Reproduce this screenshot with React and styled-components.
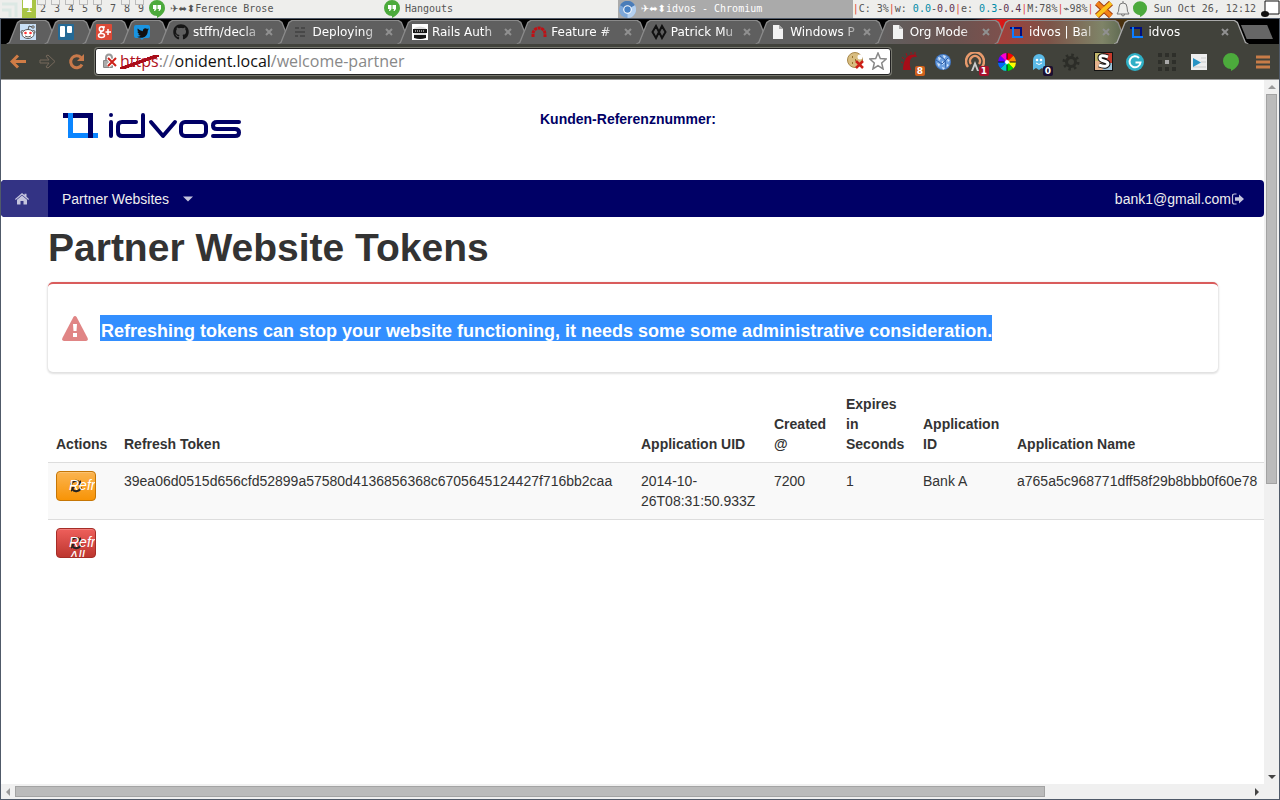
import React from "react";
import styled, { createGlobalStyle, css } from "styled-components";
import { FaGithub, FaTwitter } from "react-icons/fa";

const GlobalStyle = createGlobalStyle`
  * {
    box-sizing: border-box;
  }

  body {
    margin: 0;
    font-family: "Liberation Sans", Arial, sans-serif;
    font-size: 14px;
    line-height: 20px;
    color: #333;
    background: #fff;
  }

  svg {
    display: block;
    flex: none;
  }
`;

const Screen = styled.div`
  display: flex;
  flex-direction: column;
  height: 100vh;
  overflow: hidden;
`;

/* ---------- desktop bar ---------- */

const DesktopBar = styled.header`
  display: flex;
  flex: none;
  height: 18px;
  background: #eeeeec;
  color: #555;
  font: 10px/18px "DejaVu Sans Mono", monospace;
  white-space: pre;
`;

const Launcher = styled.div`
  width: 22px;
  padding: 1px 2px;
`;

const Workspace = styled.button`
  width: 14px;
  padding: 0;
  border: 0;
  font: inherit;
  text-align: center;
  color: ${(p) => (p.$active ? "#fff" : "#555")};
  background: ${(p) => (p.$active ? "#a9c545" : "transparent")};
  position: relative;

  &::before {
    content: "";
    display: ${(p) => (p.$empty ? "none" : "block")};
    position: absolute;
    left: 1px;
    top: 0;
    width: 7px;
    height: ${(p) => (p.$active ? "7px" : "4px")};
    border: 1px solid ${(p) => (p.$active ? "#fff" : "#bbb")};
    border-top: 0;
    background: ${(p) => (p.$active ? "#fff" : "transparent")};
  }
`;

const Task = styled.button`
  display: flex;
  align-items: center;
  gap: 5px;
  flex: 1;
  padding: 0 1px;
  border: 0;
  font: inherit;
  white-space: pre;
  color: ${(p) => (p.$active ? "#fff" : "#555")};
  background: ${(p) => (p.$active ? "#aaa" : "transparent")};
`;

const Flags = styled.span`
  font-family: "DejaVu Sans", sans-serif;
`;

const Stats = styled.div`
  width: 242px;
`;

const Sep = styled.span`
  color: #e0443a;
`;

const Read = styled.span`
  color: #008ba7;
`;

const Write = styled.span`
  color: #5c3350;
`;

const Tray = styled.div`
  display: flex;
  align-items: center;
  gap: 3px;
`;

const Clock = styled.time`
  padding: 0 2px 0 4px;
`;

/* ---------- browser ---------- */

const Browser = styled.div`
  display: flex;
  flex-direction: column;
  flex: 1;
  min-height: 0;
  border: 1px solid #505a69;
`;

const TabStrip = styled.nav`
  display: flex;
  align-items: flex-end;
  flex: none;
  height: 25px;
  padding: 0 6px 0 5px;
  background: linear-gradient(
    90deg,
    #000 0 76%,
    #e01818 78%,
    #7a1a10 83%,
    #26400c 91%,
    #000 94%
  );
`;

const Tab = styled.button`
  display: flex;
  align-items: center;
  gap: 4px;
  flex: ${(p) => (p.$pinned ? "0 0 54px" : "1 1 0")};
  min-width: 0;
  height: 24px;
  margin-right: -16px;
  padding: ${(p) => (p.$pinned ? "0 14px" : "0 20px 0 15px")};
  border: 0;
  background: none;
  color: #fff;
  font: 12px/20px "DejaVu Sans", sans-serif;
  position: relative;
  z-index: ${(p) => (p.$active ? 2 : 1)};

  &::before,
  &::after {
    content: "";
    position: absolute;
    inset: 0;
    z-index: -1;
    background: ${(p) => (p.$active ? "#aaa" : "#8a8a8a")};
    clip-path: polygon(
      0 100%,
      3px 22px,
      11px 2px,
      14px 0,
      calc(100% - 14px) 0,
      calc(100% - 11px) 2px,
      calc(100% - 3px) 22px,
      100% 100%
    );
  }

  &::after {
    inset: 1px 1px 0;
    background: ${(p) => p.$tint || "#5f5f5f"};
  }

  &:last-of-type {
    margin-right: 0;
  }
`;

const TabTitle = styled.span`
  flex: 1;
  overflow: hidden;
  text-align: left;
  white-space: nowrap;
  mask-image: linear-gradient(90deg, #000 75%, rgba(0, 0, 0, 0.2) 100%);
`;

const TabClose = styled.svg`
  width: 8px;
  height: 8px;
  stroke: #909090;
  stroke-width: 2;
`;

const NewTab = styled.a`
  width: 32px;
  height: 14px;
  margin: 0 0 5px -8px;
  background: #666;
  clip-path: polygon(0 0, 82% 0, 100% 100%, 18% 100%);
`;

const Toolbar = styled.div`
  display: flex;
  align-items: center;
  flex: none;
  height: 36px;
  background: #41423b;
  border-bottom: 1px solid #999;
`;

const ToolButton = styled.button`
  display: flex;
  align-items: center;
  justify-content: center;
  flex: none;
  width: ${(p) => p.$width || 32}px;
  height: 28px;
  padding: 0;
  border: 0;
  background: none;
  position: relative;
`;

const NavButtons = styled.div`
  display: flex;
  padding: 0 4px 0 3px;
`;

const Omnibox = styled.div`
  display: flex;
  align-items: center;
  flex: 1;
  min-width: 0;
  height: 27px;
  padding: 0 3px 2px 6px;
  background: #fff;
  border: 1px solid #222;
  border-radius: 3px;
  box-shadow: 0 0 0 1px #77786f;
  font: 16px/24px "Open Sans", sans-serif;
  color: #888;
`;

const Scheme = styled.span`
  margin-left: 2px;
  color: #b01020;
  background: linear-gradient(
      to top left,
      transparent 43%,
      #a80c18 44% 56%,
      transparent 57%
    )
    0 6px / 100% 14px no-repeat;
`;

const Host = styled.span`
  color: #111;
`;

const PathInput = styled.input`
  flex: 1;
  min-width: 0;
  padding: 0;
  border: 0;
  outline: 0;
  font: inherit;
  color: inherit;
  background: transparent;
`;

const OmniIcons = styled.div`
  display: flex;
  gap: 4px;
`;

const Extensions = styled.div`
  display: flex;
  margin-left: 4px;
`;

const Badge = styled.span`
  position: absolute;
  right: 2px;
  bottom: 0;
  width: 10px;
  border-radius: 2px;
  background: ${(p) => p.$color};
  color: #fff;
  font: bold 9px/10px "DejaVu Sans", sans-serif;
`;

/* ---------- scrolling view ---------- */

const View = styled.div`
  display: grid;
  grid-template: minmax(0, 1fr) 15px / minmax(0, 1fr) 15px;
  flex: 1;
  min-height: 0;
`;

const ScrollTrack = styled.div`
  display: flex;
  flex-direction: ${(p) => (p.$vertical ? "column" : "row")};
  align-items: center;
  background: #f0f0f0;
`;

const ScrollArrow = styled.span`
  display: flex;
  align-items: center;
  justify-content: center;
  width: 14px;
  height: 14px;
  color: ${(p) => (p.$idle ? "#999" : "#444")};
`;

const ScrollRoom = styled.div`
  display: flex;
  flex: 1;
  flex-direction: inherit;
  align-items: center;
`;

const ScrollThumb = styled.div`
  background: #bbb;
  border: 1px solid #a3a3a3;
  ${(p) =>
    p.$vertical
      ? css`
          flex: 23;
          width: 11px;
        `
      : css`
          flex: 85;
          height: 11px;
        `}
`;

const ScrollRest = styled.div`
  flex: 17;
`;

/* ---------- page ---------- */

const Page = styled.main`
  overflow: hidden;
  background: #fff;
`;

const Masthead = styled.div`
  display: flex;
  height: 100px;
  padding: 29px 62px 0;
`;

const LogoLink = styled.a`
  flex: none;
  width: 477px;
  padding-top: 4px;
`;

const Reference = styled.strong`
  color: #000066;
`;

const Navbar = styled.nav`
  display: flex;
  align-items: stretch;
  height: 37px;
  background: #000066;
  border-radius: 4px;
  overflow: hidden;
`;

const NavLink = styled.a`
  display: flex;
  align-items: center;
  gap: ${(p) => p.$gap || 0}px;
  padding: 0 ${(p) => (p.$wide ? 19 : 14)}px 0 14px;
  color: #eee;
  text-decoration: none;
  background: ${(p) => (p.$active ? "#333384" : "transparent")};

  svg {
    color: #c4c4dd;
  }

  &:last-child {
    margin-left: auto;
  }
`;

const Container = styled.div`
  width: 1170px;
  margin: 0 0 0 47px;
`;

const Title = styled.h1`
  margin: 11px 0 14px;
  font-size: 39px;
  line-height: 40px;
`;

const Message = styled.div`
  display: flex;
  align-items: center;
  gap: 12px;
  height: 90px;
  margin-bottom: 14px;
  padding: 0 14px;
  border-top: 2px solid #d95c5c;
  border-radius: 5px;
  box-shadow: 0 1px 2px 1px rgba(0, 0, 0, 0.12);
`;

const Selected = styled.mark`
  padding: 6px 0 0 1px;
  background: #338fff;
  color: #fff;
  font-size: 18px;
  font-weight: bold;
  line-height: 20px;
`;

const TokenTable = styled.table`
  width: 1600px;
  table-layout: fixed;
  border-collapse: collapse;

  th,
  td {
    padding: 8px;
    text-align: left;
  }

  th {
    vertical-align: bottom;
  }

  td {
    vertical-align: top;
    border-top: 1px solid #ddd;
  }

  tbody tr:nth-child(odd) {
    background: #f9f9f9;
  }

  tbody tr:last-child {
    background: none;
  }
`;

const RefreshButton = styled.button`
  display: flex;
  align-items: flex-start;
  width: 40px;
  height: 30px;
  padding: 6px 0 0 12px;
  overflow: hidden;
  border: 1px solid ${(p) => (p.$danger ? "#a52d27" : "#c67605")};
  border-radius: 4px;
  background: ${(p) =>
    p.$danger
      ? "linear-gradient(#ee5f5b, #bd362f)"
      : "linear-gradient(#fbb450, #f89406)"};
  box-shadow: inset 0 1px 0 rgba(255, 255, 255, 0.2);
  color: #fff;
  font: italic 14px/14px "Liberation Sans", Arial, sans-serif;
`;

const RefreshIcon = styled.i`
  display: block;
  width: 14px;
  height: 16px;
  text-align: left;
  background: url('data:image/svg+xml,<svg xmlns="http://www.w3.org/2000/svg" width="14" height="14" viewBox="0 0 14 14"><path d="M2 6a5 5 0 0 1 9-2M12 8a5 5 0 0 1-9 2" fill="none" stroke="%23222" stroke-width="2"/><path d="M12 1v5H8zM2 13V8h4z" fill="%23222"/></svg>')
    no-repeat 0 1px;
`;

/* ---------- icons ---------- */

const Hangouts = ({ size = 18, plain }) => (
  <svg width={size - 2} height={size} viewBox="0 0 16 18">
    <path d="M8 0a8 8 0 0 1 8 8c0 4-3 7.500-8 10v-2A8 8 0 0 1 8 0z" fill="#4caa3c" />
    {!plain && (
      <path d="M4 5h3.500v4L6 11H5l.5-2H4zM8.500 5H12v4l-1.500 2h-1l.5-2H8.500z" fill="#fff" />
    )}
  </svg>
);

const Chromium = () => (
  <svg width="17" height="17" viewBox="0 0 16 16">
    <circle cx="8" cy="8" r="8" fill="#7da7d9" />
    <path d="M8 8L1 4a8 8 0 0 1 14 0z" fill="#4a7cb8" />
    <path d="M8 8l7-4a8 8 0 0 1-7 12z" fill="#b4d0f0" />
    <circle cx="8" cy="8" r="4" fill="#fff" />
    <circle cx="8" cy="8" r="3" fill="#4680c4" />
  </svg>
);

const Reddit = () => (
  <svg width="16" height="16" viewBox="0 0 16 16">
    <path fill="#c9e0f7" d="M0 0h16v16H0z" />
    <g fill="#fff" stroke="#333" strokeWidth=".8">
      <path d="M8 6l1-4 3 1" fill="none" />
      <circle cx="13" cy="3" r="1.200" />
      <circle cx="2.500" cy="8" r="1.500" />
      <circle cx="13.500" cy="8" r="1.500" />
      <ellipse cx="8" cy="10" rx="6" ry="4.500" />
      <path d="M5 12q3 2 6 0" fill="none" />
    </g>
    <circle cx="5.500" cy="9" r="1.300" fill="#f33" />
    <circle cx="10.500" cy="9" r="1.300" fill="#f33" />
  </svg>
);

const Trello = () => (
  <svg width="16" height="16" viewBox="0 0 16 16">
    <rect width="16" height="16" rx="1" fill="#256a96" />
    <rect x="2" y="2" width="5" height="11" rx="1" fill="#fff" />
    <rect x="9" y="2" width="5" height="7" rx="1" fill="#fff" />
  </svg>
);

const GooglePlus = () => (
  <svg width="16" height="16" viewBox="0 0 16 16">
    <rect width="16" height="16" rx="1" fill="#db4a37" />
    <g fill="none" stroke="#fff" strokeWidth="1.500">
      <circle cx="5.500" cy="5" r="2.200" />
      <path d="M6 3h3M6 7q-3 1 0 2.500" />
      <ellipse cx="5.500" cy="11.500" rx="3" ry="2" />
      <path d="M12 5v6M9.500 8h5.500" />
    </g>
  </svg>
);

const TwitterTile = () => (
  <svg width="16" height="16" viewBox="0 0 16 16">
    <path d="M2 1h12q2 0 2 2v9q0 2-2 2h-4l-2 2-2-2H2q-2 0-2-2V3q0-2 2-2z" fill="#1a94e0" />
    <FaTwitter x="3" y="3" width="10" height="10" color="#111" />
  </svg>
);

const Lines = () => (
  <svg width="16" height="16" viewBox="0 0 16 16" stroke="#484848" strokeWidth="2">
    <path d="M3 4h4M9 4h4M3 8h10M3 12h3M8 12h5" />
  </svg>
);

const Rails = () => (
  <svg width="16" height="16" viewBox="0 0 16 16">
    <path fill="#fff" d="M0 0h16v16H0z" />
    <path d="M2 4q6-3 12 0v9q-6 3-12 0z" fill="#ddd" />
    <path d="M1 5h14v4H1zM2 11h12v3q-6 2-12 0z" fill="#161616" />
    <path d="M3 7h10" stroke="#fff" strokeDasharray="1 1" />
  </svg>
);

const Redmine = () => (
  <svg width="16" height="16" viewBox="0 0 16 16">
    <path d="M2 13V10a6 6 0 0 1 12 0v3" fill="none" stroke="#c01015" strokeWidth="3" strokeDasharray="3 .6" />
  </svg>
);

const Rings = () => (
  <svg width="16" height="16" viewBox="0 0 16 16" fill="none" stroke="#111" strokeWidth="2">
    <path d="M5 2L1.500 8 5 14l3-6zM11 2L8 8l3 6 3.500-6z" />
  </svg>
);

const Sheet = () => (
  <svg width="16" height="16" viewBox="0 0 16 16">
    <path d="M3 1h6l4 4v10H3z" fill="#f2f2f2" />
    <path d="M9 1v4h4z" fill="#aaa" />
  </svg>
);

const Crop = () => (
  <svg width="16" height="16" viewBox="0 0 16 16" fill="none" strokeWidth="2">
    <path d="M1 4h11v10" stroke="#000e80" />
    <path d="M4 3v10h10" stroke="#0a7cff" />
  </svg>
);

const Logo = () => (
  <svg width="180" height="26" viewBox="0 0 180 26" fill="none" role="img" aria-label="idvos">
    <path d="M0 0h29v5H0z" fill="#000066" />
    <path d="M5 0h5v20h25v5H5z" fill="#0a85ff" />
    <path d="M25 0h5v25h-5z" fill="#000066" />
    <g stroke="#000066" strokeWidth="4" strokeLinecap="round" strokeLinejoin="round">
      <path d="M48 2v0M48 9v14" />
      <path d="M80 2v21H59q-4 0-4-4v-6q0-4 4-4h14" />
      <path d="M88 9l12 14 12-14" />
      <rect x="118" y="9" width="25" height="14" rx="4" />
      <path d="M176 9h-22q-4 0-4 3.500t4 3.500h18q4 0 4 3.500t-4 3.500h-22" />
    </g>
  </svg>
);

const Home = () => (
  <svg width="14" height="14" viewBox="0 0 14 14" fill="currentColor">
    <path d="M7 3.500l5 4.200V12q0 .6-.6.600H8.500V9h-3v3.600H2.600Q2 12.600 2 12V7.700z" />
    <path d="M7 1l2.500 2.100V1.800h2v3L14 7l-.7.900L7 2.700.7 7.900 0 7z" />
  </svg>
);

const SignOut = () => (
  <svg width="14" height="14" viewBox="0 0 14 14">
    <path d="M5.500 2H3.500Q1.500 2 1.500 4v6q0 2 2 2h2" fill="none" stroke="currentColor" strokeWidth="1.200" />
    <path d="M4 5.200h4V2.500L13 7l-5 4.500V8.800H4z" fill="currentColor" />
  </svg>
);

const Warning = () => (
  <svg width="26" height="25" viewBox="0 0 26 25">
    <path d="M13 0q1 0 1.600 1l11 21q.8 3-1.600 3H2q-2.400 0-1.600-3l11-21Q12 0 13 0z" fill="#e08585" />
    <path d="M11 8h4l-.5 7h-3zM11 17h4v4h-4z" fill="#fff" />
  </svg>
);

const Caret = ({ d, size = 8 }) => (
  <svg width={size} height={size} viewBox="0 0 8 8" fill="currentColor">
    <path d={d} />
  </svg>
);

const Rhino = () => (
  <svg width="22" height="22" viewBox="0 0 22 22">
    <path d="M3 19q0-7 3-12 4-5 10-3l1 2q-6-1-7 4-1 4 1 9z" fill="#a50d18" />
    <path d="M3 12l-2-1M4 8L2 6M7 5L6 2M11 3V1M15 4V1" stroke="#a50d18" />
  </svg>
);

const Globe = () => (
  <svg width="18" height="18" viewBox="0 0 18 18">
    <circle cx="9" cy="9" r="8" fill="#4278c4" />
    <circle cx="9" cy="9" r="7" fill="#6da0e0" />
    <path d="M4 4l3 1-2 3zM9 2l3 1-2 3zM13 6l3 1-2 2zM3 10l3 1-1 3zM8 8l3 2-3 2zM13 11l2 1-3 3zM8 14l3 1-2 2z" fill="#d4e6fb" />
    <path d="M2 7l6 4 6-6M6 3l5 4 1 8" stroke="#2e5fa8" fill="none" />
  </svg>
);

const Antenna = () => (
  <svg width="20" height="20" viewBox="0 0 20 20" fill="none">
    <path d="M3 15a9 9 0 1 1 14 0M6 12a5 5 0 1 1 8 0" stroke="#e89a6c" strokeWidth="2.500" />
    <path d="M10 9l4 10h-2l-2-5-2 5H6z" fill="#ccc" />
  </svg>
);

const wheel = ["#f00", "#f80", "#ff0", "#0d0", "#0cc", "#06f", "#60f", "#f0c"];

const ColorWheel = () => (
  <svg width="18" height="18" viewBox="0 0 18 18">
    {wheel.map((color, i) => (
      <path key={color} d="M9 9V0a9 9 0 0 1 6.400 2.600z" fill={color} transform={`rotate(${i * 45} 9 9)`} />
    ))}
    <path d="M9 0v6M9 12v6M0 9h6M12 9h6" stroke="#111" />
    <circle cx="9" cy="9" r="2" fill="#fff" />
  </svg>
);

const Ghost = () => (
  <svg width="18" height="20" viewBox="0 0 18 20">
    <path d="M3 18V8a6 6 0 0 1 12 0v10l-3-2-3 2-3-2z" fill="#5bbbe8" />
    <circle cx="7" cy="8" r="1.300" fill="#fff" />
    <circle cx="11" cy="8" r="1.300" fill="#fff" />
    <path d="M6 11q3 3 6 0" stroke="#fff" fill="none" />
  </svg>
);

const Gear = () => (
  <svg width="18" height="18" viewBox="0 0 18 18" fill="none" stroke="#2c2d28">
    <circle cx="9" cy="9" r="4.500" strokeWidth="3" />
    <circle cx="9" cy="9" r="7" strokeWidth="3" strokeDasharray="2.500 3" />
  </svg>
);

const Stylish = () => (
  <svg width="19" height="19" viewBox="0 0 19 19">
    <path d="M0 0h19v19H0z" fill="#111" />
    <path d="M1 1h8v8H1z" fill="#c3b86c" />
    <path d="M9 1h9v10H9z" fill="#c53b2c" />
    <path d="M1 9h8v9H1z" fill="#e6b28c" />
    <path d="M9 11h9v7H9z" fill="#9cc4dc" />
    <path d="M14 5q-8-3-8 1 0 2 4 3t4 3q-1 4-9 1" fill="none" stroke="#111" strokeWidth="5" />
    <path d="M14 5q-8-3-8 1 0 2 4 3t4 3q-1 4-9 1" fill="none" stroke="#fff" strokeWidth="3" />
  </svg>
);

const GRing = () => (
  <svg width="18" height="18" viewBox="0 0 18 18">
    <circle cx="9" cy="9" r="9" fill="#2fb0c6" />
    <path d="M13 5a5.500 5.500 0 1 0 1.500 4.500H9.500" fill="none" stroke="#fff" strokeWidth="2" />
  </svg>
);

const Dots = () => (
  <svg width="18" height="18" viewBox="0 0 18 18" fill="#2e2f2a">
    {[0, 7, 14].flatMap((y) =>
      [0, 7, 14].map((x) => <rect key={`${x}-${y}`} x={x} y={y} width="4" height="4" />)
    )}
    <rect x="7" y="7" width="4" height="4" fill="#aaa" />
  </svg>
);

const Player = () => (
  <svg width="16" height="16" viewBox="0 0 16 16">
    <path d="M0 0h16v16H0z" fill="#eee" />
    <path d="M10 4h5M10 8h5M2 13h13" stroke="#ccc" />
    <path d="M2 4l8 4.500L2 13z" fill="#2793c4" />
  </svg>
);

const Menu = () => (
  <svg width="14" height="14" viewBox="0 0 14 14" stroke="#c87c48" strokeWidth="3">
    <path d="M0 2h14M0 7h14M0 12h14" />
  </svg>
);

const BackArrow = ({ color, flip }) => (
  <svg width="17" height="15" viewBox="0 0 17 15" fill="none" stroke={color} strokeWidth={flip ? 1 : 3}>
    {flip ? <path d="M1 6h9L7 2l2-1 7 6.500L9 14l-2-1 3-4H1z" /> : <path d="M16 7.500H2M8 1.500l-6 6 6 6" />}
  </svg>
);

const Reload = () => (
  <svg width="17" height="17" viewBox="0 0 17 17">
    <path d="M13 4.500a6 6 0 1 0 1 7" fill="none" stroke="#c8794a" strokeWidth="3" />
    <path d="M16 1v7H9z" fill="#c8794a" />
  </svg>
);

const BadLock = () => (
  <svg width="16" height="16" viewBox="0 0 16 16">
    <path d="M4 8V5q0-3.500 3-3.500T10 5v3" fill="none" stroke="#999" strokeWidth="2" />
    <rect x="1" y="7" width="10" height="8" rx="1" fill="#888" />
    <path d="M2 9h8M2 11h8M2 13h8" stroke="#ccc" />
    <path d="M6 5l8 8M14 5l-8 8" stroke="#fff" strokeWidth="4" />
    <path d="M6 5l8 8M14 5l-8 8" stroke="#cc2018" strokeWidth="2" />
  </svg>
);

const Cookie = () => (
  <svg width="18" height="18" viewBox="0 0 18 18">
    <circle cx="8" cy="8" r="7.500" fill="#d8bd80" stroke="#a8874a" />
    <circle cx="13" cy="5" r="2.500" fill="#fff" />
    <path d="M5 5h1M8 8h1M5 11h1" stroke="#96702c" strokeWidth="2" />
    <path d="M9 9l7 7M16 9l-7 7" stroke="#cc2018" strokeWidth="2.500" />
  </svg>
);

const Star = () => (
  <svg width="18" height="18" viewBox="0 0 18 18">
    <path d="M9 1l2.300 5.500 5.900.5-4.500 3.900L14.100 17 9 13.700 3.900 17l1.400-6.100L.8 7l5.900-.5z" fill="#fff" stroke="#888" strokeWidth="1.500" />
  </svg>
);

const CrossedX = () => (
  <svg width="18" height="17" viewBox="0 0 18 17">
    <path d="M2 2l14 13M16 2L2 15" stroke="#a23d10" strokeWidth="6" />
    <path d="M2 2l14 13" stroke="#f08018" strokeWidth="4" />
    <path d="M16 2L2 15" stroke="#fbc21c" strokeWidth="4" />
  </svg>
);

const Bell = () => (
  <svg width="14" height="16" viewBox="0 0 14 16" fill="none" stroke="#777">
    <path d="M1 13q2-2 2-7 0-4 4-4t4 4q0 5 2 7zM5.500 13q0 2 1.500 2t1.500-2M7 0v2" />
  </svg>
);

const Corner = () => (
  <svg width="19" height="18" viewBox="0 0 19 18">
    <path d="M4 1h14v13H4z" fill="#fff" stroke="#111" />
    <ellipse cx="4" cy="14" rx="4" ry="3" fill="#111" />
  </svg>
);

const Grip = () => (
  <svg width="17" height="16" viewBox="0 0 17 16" fill="none" stroke="#dce8e4" strokeWidth="3">
    <path d="M0 3h14v13M0 9h8v7" />
  </svg>
);

/* ---------- content ---------- */

const pinned = [
  { name: "Reddit", icon: <Reddit /> },
  { name: "Trello", icon: <Trello /> },
  { name: "Google+", icon: <GooglePlus /> },
  { name: "Twitter", icon: <TwitterTile /> },
];

const tabs = [
  { title: "stffn/decla", icon: <FaGithub size={16} color="#161616" /> },
  { title: "Deploying", icon: <Lines /> },
  { title: "Rails Auth", icon: <Rails /> },
  { title: "Feature #", icon: <Redmine /> },
  { title: "Patrick Mu", icon: <Rings /> },
  { title: "Windows P", icon: <Sheet /> },
  { title: "Org Mode", icon: <Sheet />, tint: "linear-gradient(90deg, #5f5f5f, #6b5350 60%, #80504c)" },
  { title: "idvos | Bal", icon: <Crop />, tint: "linear-gradient(90deg, #a83c38, #7c5348 40%, #7f8468 80%, #55624a)" },
  { title: "idvos", icon: <Crop />, tint: "#41423b", active: true },
];

const extensions = [
  { name: "Rhino", icon: <Rhino />, badge: "8", color: "#d0601c" },
  { name: "Globe", icon: <Globe /> },
  { name: "Antenna", icon: <Antenna />, badge: "1", color: "#a8102c" },
  { name: "Colors", icon: <ColorWheel /> },
  { name: "Ghost", icon: <Ghost />, badge: "0", color: "#1b0f30" },
  { name: "Settings", icon: <Gear /> },
  { name: "Styles", icon: <Stylish /> },
  { name: "Search", icon: <GRing /> },
  { name: "Grid", icon: <Dots /> },
  { name: "Player", icon: <Player /> },
  { name: "Chat", icon: <Hangouts plain /> },
  { name: "Menu", icon: <Menu /> },
];

const columns = [
  { label: "Actions", width: 68 },
  { label: "Refresh Token", width: 517 },
  { label: "Application UID", width: 133 },
  { label: "Created @", width: 72 },
  { label: "Expires in Seconds", width: 77 },
  { label: "Application ID", width: 94 },
  { label: "Application Name" },
];

const tokens = [
  [
    "39ea06d0515d656cfd52899a57580d4136856368c6705645124427f716bb2caa",
    "2014-10-26T08:31:50.933Z",
    "7200",
    "1",
    "Bank A",
    "a765a5c968771dff58f29b8bbb0f60e78",
  ],
];

function StatusBar() {
  return (
    <DesktopBar>
      <Launcher>
        <Grip />
      </Launcher>
      {[1, 2, 3, 4, 5, 6, 7, 8, 9].map((n) => (
        <Workspace key={n} $active={n === 1} $empty={n === 7}>
          {n}
        </Workspace>
      ))}
      <Task>
        <Hangouts />
        <span>
          <Flags>✈⬌⬍</Flags>Ference Brose
        </span>
      </Task>
      <Task>
        <Hangouts />
        Hangouts
      </Task>
      <Task $active>
        <Chromium />
        <span>
          <Flags>✈⬌⬍</Flags>idvos - Chromium
        </span>
      </Task>
      <Stats>
        <Sep>|</Sep>C: 3%<Sep>|</Sep>w: <Read>0.0</Read>-<Write>0.0</Write>
        <Sep>|</Sep>e: <Read>0.3</Read>-<Write>0.4</Write>
        <Sep>|</Sep>M:78%<Sep>|</Sep>⌁98%<Sep>|</Sep>
      </Stats>
      <Tray>
        <CrossedX />
        <Bell />
        <Hangouts size={16} plain />
        <Clock>Sun Oct 26, 12:12</Clock>
        <Corner />
      </Tray>
    </DesktopBar>
  );
}

function Tabs() {
  return (
    <TabStrip>
      {pinned.map((tab) => (
        <Tab key={tab.name} $pinned aria-label={tab.name}>
          {tab.icon}
        </Tab>
      ))}
      {tabs.map((tab) => (
        <Tab key={tab.title} $active={tab.active} $tint={tab.tint}>
          {tab.icon}
          <TabTitle>{tab.title}</TabTitle>
          <TabClose viewBox="0 0 8 8">
            <path d="M1 1l6 6M7 1L1 7" />
          </TabClose>
        </Tab>
      ))}
      <NewTab href="#new" aria-label="New tab" />
    </TabStrip>
  );
}

function AddressBar() {
  return (
    <Toolbar>
      <NavButtons>
        <ToolButton $width={29} aria-label="Back">
          <BackArrow color="#d07c46" />
        </ToolButton>
        <ToolButton $width={29} aria-label="Forward">
          <BackArrow color="#76695c" flip />
        </ToolButton>
        <ToolButton $width={29} aria-label="Reload">
          <Reload />
        </ToolButton>
      </NavButtons>
      <Omnibox>
        <BadLock />
        <Scheme>https</Scheme>
        <span>://</span>
        <Host>onident.local</Host>
        <PathInput aria-label="Address" defaultValue="/welcome-partner" />
        <OmniIcons>
          <Cookie />
          <Star />
        </OmniIcons>
      </Omnibox>
      <Extensions>
        {extensions.map((ext) => (
          <ToolButton key={ext.name} aria-label={ext.name}>
            {ext.icon}
            {ext.badge && <Badge $color={ext.color}>{ext.badge}</Badge>}
          </ToolButton>
        ))}
      </Extensions>
    </Toolbar>
  );
}

function Scrollbar({ vertical }) {
  return (
    <ScrollTrack $vertical={vertical}>
      <ScrollArrow $idle>
        <Caret d={vertical ? "M0 6l4-4 4 4z" : "M6 0L2 4l4 4z"} />
      </ScrollArrow>
      <ScrollRoom>
        <ScrollThumb $vertical={vertical} />
        <ScrollRest />
      </ScrollRoom>
      <ScrollArrow>
        <Caret d={vertical ? "M0 2l4 4 4-4z" : "M2 0l4 4-4 4z"} />
      </ScrollArrow>
    </ScrollTrack>
  );
}

function Tokens() {
  return (
    <TokenTable>
      <colgroup>
        {columns.map((col) => (
          <col key={col.label} width={col.width} />
        ))}
      </colgroup>
      <thead>
        <tr>
          {columns.map((col) => (
            <th key={col.label}>{col.label}</th>
          ))}
        </tr>
      </thead>
      <tbody>
        {tokens.map((cells) => (
          <tr key={cells[0]}>
            <td>
              <RefreshButton>
                <RefreshIcon>Refresh</RefreshIcon>
              </RefreshButton>
            </td>
            {cells.map((cell) => (
              <td key={cell}>{cell}</td>
            ))}
          </tr>
        ))}
        <tr>
          <td colSpan={columns.length}>
            <RefreshButton $danger>
              <RefreshIcon>Refresh All</RefreshIcon>
            </RefreshButton>
          </td>
        </tr>
      </tbody>
    </TokenTable>
  );
}

export default function App() {
  return (
    <Screen>
      <GlobalStyle />
      <StatusBar />
      <Browser>
        <Tabs />
        <AddressBar />
        <View>
          <Page>
            <Masthead>
              <LogoLink href="#">
                <Logo />
              </LogoLink>
              <Reference>Kunden-Referenznummer:</Reference>
            </Masthead>
            <Navbar>
              <NavLink href="#" $active $wide aria-label="Home">
                <Home />
              </NavLink>
              <NavLink href="#" $gap={14}>
                Partner Websites
                <Caret d="M0 2l4 4 4-4z" size={10} />
              </NavLink>
              <NavLink href="#" $wide>
                bank1@gmail.com
                <SignOut />
              </NavLink>
            </Navbar>
            <Container>
              <Title>Partner Website Tokens</Title>
              <Message>
                <Warning />
                <Selected>
                  Refreshing tokens can stop your website functioning, it needs some some administrative consideration.
                </Selected>
              </Message>
              <Tokens />
            </Container>
          </Page>
          <Scrollbar vertical />
          <Scrollbar />
          <ScrollTrack />
        </View>
      </Browser>
    </Screen>
  );
}
